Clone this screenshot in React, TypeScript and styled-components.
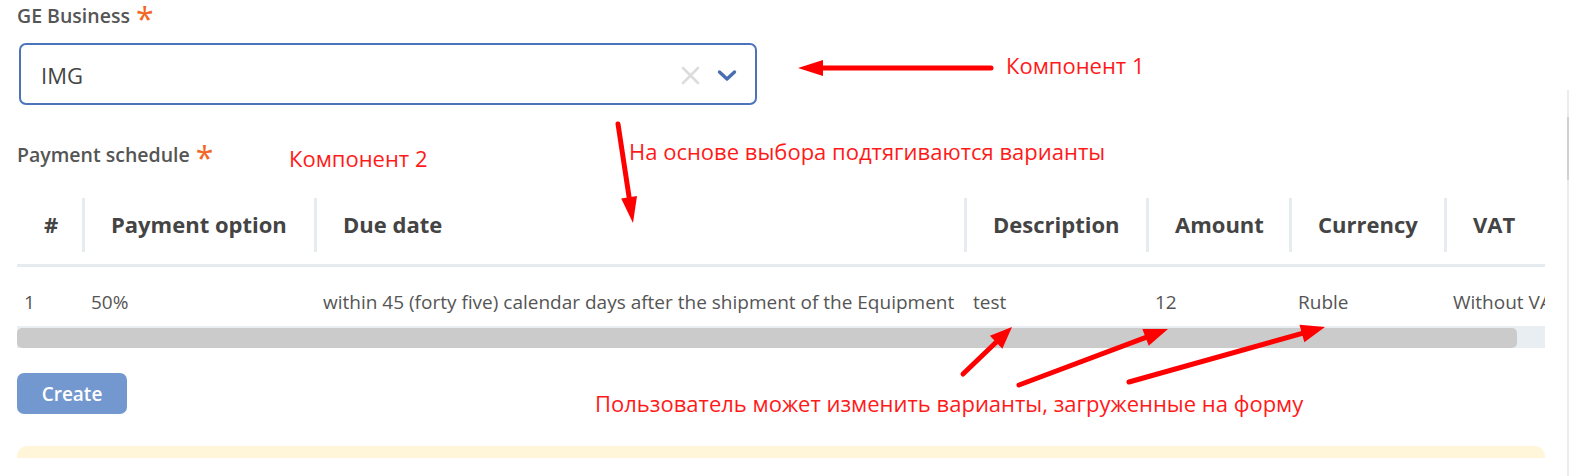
import React from "react";
import styled, { createGlobalStyle } from "styled-components";

const GlobalStyle = createGlobalStyle`
  html, body {
    margin: 0;
    padding: 0;
    background: #fff;
  }
  body {
    font-family: "Open Sans", "Noto Sans", sans-serif;
  }
`;

const Page = styled.div`
  position: relative;
  width: 1586px;
  height: 476px;
  overflow: hidden;
  box-sizing: border-box;
  padding: 4px 0 0 17px;
  background: #fff;
`;

const Label = styled.div<{ $gap?: number }>`
  margin-top: ${(p) => p.$gap ?? 0}px;
  height: 24px;
  font-size: 19.5px;
  line-height: 24px;
  font-weight: 600;
  color: #555;
`;

const Required = styled.span`
  margin-left: 6px;
  font-size: 32px;
  font-weight: 500;
  line-height: 0;
  vertical-align: -8px;
  color: #f26522;
`;

const SelectBox = styled.div`
  margin: 15px 0 0 2px;
  width: 738px;
  height: 62px;
  box-sizing: border-box;
  border: 2.5px solid #4b74bb;
  border-radius: 7px;
  display: flex;
  align-items: center;
  padding: 2px 18px 0 20px;
`;

const SelectValue = styled.span`
  flex: 1;
  font-size: 22px;
  color: #444;
`;

const SelectIcons = styled.div`
  display: flex;
  align-items: center;
  gap: 17px;
`;

const TableWrap = styled.div`
  margin-top: 18px;
  width: 1528px;
  overflow: hidden;
`;

const Table = styled.table`
  table-layout: fixed;
  border-collapse: separate;
  border-spacing: 0;
  width: 1607px;
`;

const Th = styled.th<{ $first?: boolean }>`
  position: relative;
  padding: 25px 0 25px ${(p) => (p.$first ? 27 : 29)}px;
  line-height: 29px;
  text-align: left;
  font-size: 22px;
  font-weight: 700;
  color: #444;
  white-space: nowrap;
  border-bottom: 3px solid #e6ebef;

  &::before {
    content: "";
    display: ${(p) => (p.$first ? "none" : "block")};
    position: absolute;
    left: 0;
    top: 13px;
    width: 3px;
    height: 54px;
    background: #e6ebef;
  }
`;

const Td = styled.td<{ $first?: boolean }>`
  padding: 23px 0 11px ${(p) => (p.$first ? 7 : 9)}px;
  line-height: 25px;
  font-size: 19px;
  color: #555;
  white-space: nowrap;
  overflow: hidden;
`;

const ScrollTrack = styled.div`
  width: 1528px;
  height: 22px;
  box-sizing: border-box;
  padding-top: 2px;
  background: #e8eef1;
`;

const ScrollThumb = styled.div`
  width: 1500px;
  height: 20px;
  border-radius: 5px;
  background: #cbcbcb;
`;

const CreateButton = styled.button`
  display: block;
  margin-top: 25px;
  width: 110px;
  height: 41px;
  border: none;
  border-radius: 7px;
  background: #7398d0;
  color: #fff;
  font-family: "Open Sans", sans-serif;
  font-size: 19px;
  font-weight: 600;
  padding: 0;
`;

const Banner = styled.div`
  margin-top: 32px;
  width: 1528px;
  height: 12px;
  border-radius: 10px 10px 0 0;
  background: #fff5d9;
`;

const RightRail = styled.div`
  position: absolute;
  left: 1567px;
  top: 90px;
  bottom: 0;
  width: 2px;
  background: #ececec;
`;

const RailThumb = styled.div`
  margin-top: 27px;
  height: 63px;
  background: #d2d2d2;
`;

const Overlay = styled.svg`
  position: absolute;
  left: 0;
  top: 0;
  pointer-events: none;
`;

const Note = styled.div<{ $x: number; $y: number }>`
  position: absolute;
  left: ${(p) => p.$x}px;
  top: ${(p) => p.$y}px;
  font-family: "Open Sans", sans-serif;
  font-size: 22px;
  line-height: 22px;
  color: #ff1a1a;
  white-space: nowrap;
`;

const columns = [
  { title: "#", width: 65 },
  { title: "Payment option", width: 232 },
  { title: "Due date", width: 650 },
  { title: "Description", width: 182 },
  { title: "Amount", width: 143 },
  { title: "Currency", width: 155 },
  { title: "VAT", width: 180 },
];

const row = [
  "1",
  "50%",
  "within 45 (forty five) calendar days after the shipment of the Equipment",
  "test",
  "12",
  "Ruble",
  "Without VAT",
];

type Arrow = { x1: number; y1: number; x2: number; y2: number; len: number; half: number };

const arrows: Arrow[] = [
  { x1: 991, y1: 68, x2: 798, y2: 68, len: 25, half: 8 },
  { x1: 618, y1: 124, x2: 633, y2: 223, len: 26, half: 8 },
  { x1: 963, y1: 374, x2: 1012, y2: 327, len: 22, half: 9 },
  { x1: 1019, y1: 385, x2: 1168, y2: 329, len: 24, half: 9 },
  { x1: 1129, y1: 382, x2: 1325, y2: 327, len: 24, half: 9 },
];

const ArrowShape: React.FC<{ a: Arrow }> = ({ a }) => {
  const dx = a.x2 - a.x1;
  const dy = a.y2 - a.y1;
  const d = Math.hypot(dx, dy);
  const ux = dx / d;
  const uy = dy / d;
  const bx = a.x2 - ux * a.len;
  const by = a.y2 - uy * a.len;
  const nx = -uy * a.half;
  const ny = ux * a.half;
  return (
    <g>
      <line
        x1={a.x1}
        y1={a.y1}
        x2={bx + ux * 4}
        y2={by + uy * 4}
        stroke="#ff0000"
        strokeWidth={5}
        strokeLinecap="round"
      />
      <polygon
        points={`${a.x2},${a.y2} ${bx + nx},${by + ny} ${bx - nx},${by - ny}`}
        fill="#ff0000"
      />
    </g>
  );
};

export default function App() {
  return (
    <>
      <GlobalStyle />
      <Page>
        <Label>
          GE Business<Required>*</Required>
        </Label>
        <SelectBox>
          <SelectValue>IMG</SelectValue>
          <SelectIcons>
            <svg width="19" height="19" viewBox="0 0 19 19">
              <path d="M2 2 17 17M17 2 2 17" stroke="#dcdcdc" strokeWidth="2.6" strokeLinecap="round" />
            </svg>
            <svg width="20" height="13" viewBox="0 0 20 13">
              <path d="M2.5 3 10 10 17.5 3" fill="none" stroke="#4a6fb0" strokeWidth="3.4" strokeLinecap="round" strokeLinejoin="round" />
            </svg>
          </SelectIcons>
        </SelectBox>

        <Label $gap={38}>
          Payment schedule<Required>*</Required>
        </Label>
        <TableWrap>
          <Table>
            <colgroup>
              {columns.map((c) => (
                <col key={c.title} style={{ width: c.width }} />
              ))}
            </colgroup>
            <thead>
              <tr>
                {columns.map((c, i) => (
                  <Th key={c.title} $first={i === 0}>
                    {c.title}
                  </Th>
                ))}
              </tr>
            </thead>
            <tbody>
              <tr>
                {row.map((v, i) => (
                  <Td key={i} $first={i === 0}>
                    {v}
                  </Td>
                ))}
              </tr>
            </tbody>
          </Table>
          <ScrollTrack>
            <ScrollThumb />
          </ScrollTrack>
        </TableWrap>
        <CreateButton>Create</CreateButton>
        <Banner />

        <RightRail>
          <RailThumb />
        </RightRail>

        <Overlay width="1586" height="476" viewBox="0 0 1586 476">
          {arrows.map((a, i) => (
            <ArrowShape key={i} a={a} />
          ))}
        </Overlay>
        <Note $x={1006} $y={54}>Компонент 1</Note>
        <Note $x={289} $y={147}>Компонент 2</Note>
        <Note $x={629} $y={140}>На основе выбора подтягиваются варианты</Note>
        <Note $x={595} $y={392}>Пользователь может изменить варианты, загруженные на форму</Note>
      </Page>
    </>
  );
}
